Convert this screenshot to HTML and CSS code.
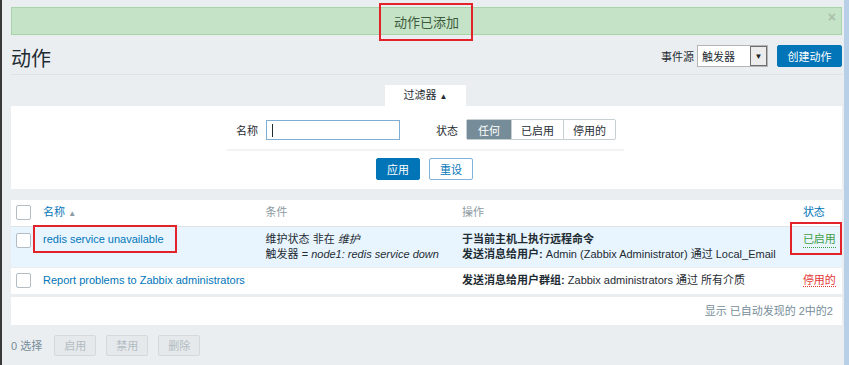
FILE: index.html
```html
<!DOCTYPE html>
<html lang="zh-CN">
<head>
    <meta charset="UTF-8">
    <title>动作</title>
    <link rel="stylesheet" href="styles.css">
</head>
<body>
    <div class="page">
        <div class="msg-good">
            <span class="msg-text mark">动作已添加</span>
            <span class="msg-close">&times;</span>
        </div>

        <header class="header-title">
            <h1>动作</h1>
            <div class="header-controls">
                <label>事件源</label>
                <div class="select">
                    <span>触发器</span>
                    <span class="select-arrow">&#9660;</span>
                </div>
                <button class="btn-main">创建动作</button>
            </div>
        </header>

        <div class="filter">
            <div class="filter-tab">过滤器 <span class="arrow-up">&#9650;</span></div>
            <div class="filter-body">
                <div class="filter-row">
                    <div class="filter-field">
                        <label>名称</label>
                        <div class="input"><span class="caret"></span></div>
                    </div>
                    <div class="filter-field">
                        <label>状态</label>
                        <div class="radio-seg">
                            <span class="on">任何</span>
                            <span>已启用</span>
                            <span>停用的</span>
                        </div>
                    </div>
                </div>
                <div class="filter-buttons">
                    <button class="btn-main">应用</button>
                    <button class="btn-alt">重设</button>
                </div>
            </div>
        </div>

        <div class="list">
            <table class="list-table">
                <thead>
                    <tr>
                        <th class="cell-check"><span class="checkbox"></span></th>
                        <th class="col-name"><a href="#">名称</a> <span class="sort">&#9650;</span></th>
                        <th class="col-cond">条件</th>
                        <th class="col-ops">操作</th>
                        <th class="col-status"><a href="#">状态</a></th>
                    </tr>
                </thead>
                <tbody>
                    <tr class="row-hl">
                        <td class="cell-check"><span class="checkbox"></span></td>
                        <td><a href="#" class="mark mark-name">redis service unavailable</a></td>
                        <td>维护状态 非在 <i>维护</i><br>触发器 = <i>node1: redis service down</i></td>
                        <td><b>于当前主机上执行远程命令</b><br><b>发送消息给用户:</b> Admin (Zabbix Administrator) 通过 Local_Email</td>
                        <td class="cell-status"><a href="#" class="status-on mark mark-status">已启用</a></td>
                    </tr>
                    <tr>
                        <td class="cell-check"><span class="checkbox"></span></td>
                        <td><a href="#">Report problems to Zabbix administrators</a></td>
                        <td></td>
                        <td><b>发送消息给用户群组:</b> Zabbix administrators 通过 所有介质</td>
                        <td class="cell-status"><a href="#" class="status-off">停用的</a></td>
                    </tr>
                </tbody>
            </table>
            <div class="paging">显示 已自动发现的 2中的2</div>
        </div>

        <div class="action-buttons">
            <span class="selected-count">0 选择</span>
            <button class="btn-disabled">启用</button>
            <button class="btn-disabled">禁用</button>
            <button class="btn-disabled">删除</button>
        </div>
    </div>
</body>
</html>
```

FILE: styles.css
```css
* {
    margin: 0;
    padding: 0;
    box-sizing: border-box;
}

body {
    font-family: 'Liberation Sans', Arial, 'Noto Sans CJK SC', sans-serif;
    font-size: 11px;
    color: #1f2c33;
    background: #ebeef0;
    height: 365px;
    overflow: hidden;
    border-left: 2px solid #3a3a3a;
    border-right: 5px solid #b8cfe8;
}

a {
    color: #0275b8;
    text-decoration: none;
}

button {
    font-family: inherit;
    font-size: 11px;
    border-radius: 2px;
    cursor: pointer;
}

.page {
    padding: 7px 2px 0 9px;
}

/* overlay marks (red boxes) */
.mark {
    position: relative;
}

.mark::after {
    content: '';
    position: absolute;
    border: 2px solid #e3232a;
}

/* message */
.msg-good {
    height: 28px;
    background: #c5e3c6;
    border: 1px solid #a7d4a8;
    display: flex;
    justify-content: center;
    align-items: center;
    position: relative;
}

.msg-text {
    font-size: 13px;
    color: #3b5b3c;
}

.msg-text::after {
    top: -9px;
    bottom: -10px;
    left: -15px;
    right: -14px;
}

.msg-close {
    position: absolute;
    right: 5px;
    top: 1px;
    color: #a9bfaa;
    font-size: 14px;
    font-weight: bold;
}

/* header */
.header-title {
    display: flex;
    justify-content: space-between;
    align-items: center;
    height: 40px;
    border-bottom: 1px solid #dde2e5;
}

.header-title h1 {
    font-size: 20px;
    font-weight: normal;
    color: #1f2c33;
    padding-top: 6px;
}

.header-controls {
    display: flex;
    align-items: center;
    padding-top: 3px;
}

.header-controls label {
    margin-right: 3px;
}

.select {
    width: 71px;
    height: 22px;
    background: #fff;
    border: 1px solid #b5b5b5;
    display: flex;
    justify-content: space-between;
    align-items: center;
    padding-left: 4px;
    margin-right: 9px;
}

.select-arrow {
    width: 17px;
    height: 20px;
    border: 1px solid #6e6e6e;
    background: #ececec;
    font-size: 8px;
    display: flex;
    align-items: center;
    justify-content: center;
    color: #222;
}

.btn-main {
    background: #0275b8;
    border: 1px solid #0275b8;
    color: #fff;
    height: 22px;
    padding: 0;
}

.header-controls .btn-main {
    width: 65px;
}

/* filter */
.filter {
    margin-top: 10px;
}

.filter-tab {
    width: 81px;
    height: 21px;
    background: #fff;
    margin-left: 374px;
    text-align: center;
    line-height: 21px;
}

.arrow-up {
    font-size: 8px;
}

.filter-body {
    background: #fff;
    height: 83px;
    padding-top: 13px;
    display: flex;
    flex-direction: column;
    align-items: center;
}

.filter-row {
    display: flex;
    gap: 36px;
    padding: 0 8px 9px 9px;
    border-bottom: 2px solid #f1f3f5;
    margin-left: -2px;
}

.filter-field {
    display: flex;
    align-items: center;
}

.filter-field label {
    margin-right: 8px;
}

.input {
    width: 134px;
    height: 20px;
    border: 1px solid #7eaed3;
    padding: 3px 5px;
}

.caret {
    display: block;
    width: 1px;
    height: 13px;
    background: #1f2c33;
}

.radio-seg {
    display: flex;
    border: 1px solid #c8cfd3;
    border-radius: 2px;
    height: 21px;
}

.radio-seg span {
    display: flex;
    align-items: center;
    justify-content: center;
    width: 52px;
    border-left: 1px solid #c8cfd3;
}

.radio-seg span:first-child {
    border-left: none;
    width: 44px;
}

.radio-seg .on {
    background: #768d99;
    color: #fff;
}

.filter-buttons {
    display: flex;
    gap: 9px;
    padding-top: 7px;
    margin-right: 4px;
}

.filter-buttons button {
    width: 44px;
}

.btn-alt {
    background: #fff;
    border: 1px solid #7fb3da;
    color: #0275b8;
    height: 22px;
}

/* list */
.list {
    margin-top: 11px;
}

.list-table {
    width: 100%;
    border-collapse: collapse;
    background: #fff;
    table-layout: fixed;
}

.list-table th,
.list-table td {
    text-align: left;
    vertical-align: middle;
    padding: 0 6px;
    line-height: 15px;
    white-space: nowrap;
}

.list-table th {
    font-weight: normal;
    color: #8d9aa2;
    height: 26px;
    border-bottom: 1px solid #dde2e5;
}

.list-table td {
    height: 27px;
    border-bottom: 1px solid #ebeef0;
}

.list-table .row-hl td {
    background: #e8f5ff;
    height: 41px;
    vertical-align: top;
    padding-top: 5px;
}

.list-table .cell-check {
    width: 26px;
    padding-left: 5px;
    padding-right: 0;
}

.list-table .row-hl .cell-check {
    padding-top: 6px;
}

.col-name {
    width: 222px;
}

.col-cond {
    width: 196px;
}

.col-ops {
    width: 340px;
}

.col-status {
    width: 45px;
}

.list-table .cell-status {
    padding-right: 0;
}

.sort {
    font-size: 8px;
    color: #8d9aa2;
}

.checkbox {
    display: block;
    width: 15px;
    height: 15px;
    background: #fff;
    border: 1px solid #b3bdc3;
    border-radius: 2px;
}

.mark-name {
    display: inline-block;
}

.mark-name::after {
    top: -7px;
    bottom: -6px;
    left: -10px;
    right: -13px;
}

.status-on {
    color: #429e47;
    border-bottom: 1px dotted #429e47;
}

.status-off {
    color: #e33734;
    border-bottom: 1px dotted #e33734;
}

.mark-status {
    display: inline-block;
}

.mark-status::after {
    top: -10px;
    bottom: -8px;
    left: -13px;
    right: -6px;
}

.paging {
    background: #fff;
    margin-top: 2px;
    height: 28px;
    line-height: 28px;
    text-align: right;
    padding-right: 9px;
    color: #768d99;
}

/* bottom actions */
.action-buttons {
    display: flex;
    align-items: center;
    margin-top: 10px;
}

.selected-count {
    color: #768d99;
    margin-right: 12px;
}

.btn-disabled {
    width: 42px;
    height: 21px;
    background: #e6e9eb;
    border: 1px solid #d3d9dc;
    color: #b2bcc2;
    margin-right: 10px;
}
```
